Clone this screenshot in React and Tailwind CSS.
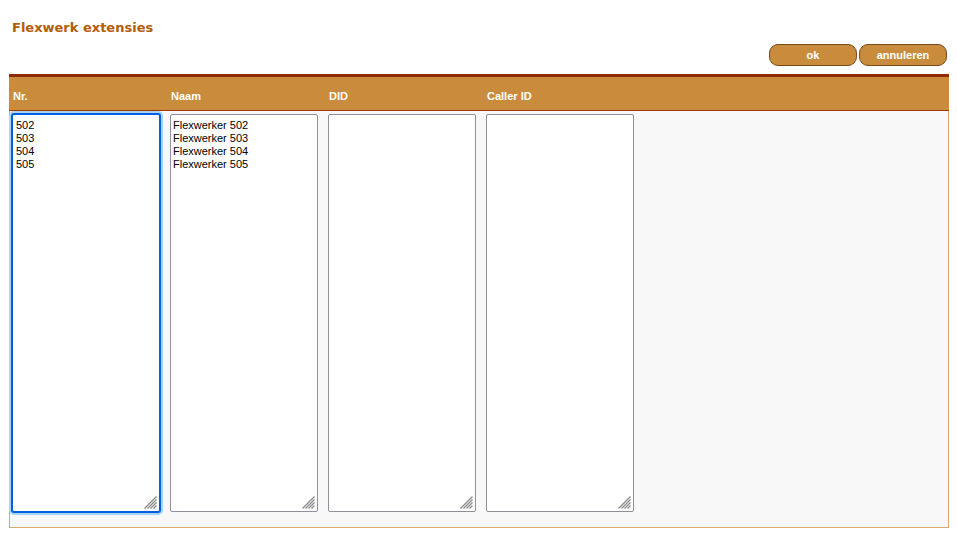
import React, { useEffect, useRef } from "react";

const columns = [
    { label: "Nr.", value: "502\n503\n504\n505", focused: true },
    { label: "Naam", value: "Flexwerker 502\nFlexwerker 503\nFlexwerker 504\nFlexwerker 505" },
    { label: "DID", value: "" },
    { label: "Caller ID", value: "" },
];

function Grip() {
    return (
        <svg width="13" height="13" viewBox="0 0 13 13" className="absolute right-[3px] bottom-[3px] pointer-events-none">
            <g stroke="#8a8a8a" strokeWidth="1.2">
                <line x1="12.5" y1="0.5" x2="0.5" y2="12.5" />
                <line x1="12.5" y1="3.5" x2="3.5" y2="12.5" />
                <line x1="12.5" y1="6.5" x2="6.5" y2="12.5" />
                <line x1="12.5" y1="9.5" x2="9.5" y2="12.5" />
            </g>
        </svg>
    );
}

function Field({ col }) {
    const ref = useRef(null);

    useEffect(() => {
        if (col.focused && ref.current) {
            const el = ref.current;
            el.focus();
            el.setSelectionRange(el.value.length, el.value.length);
        }
    }, [col.focused]);

    return (
        <div className="relative w-[148px] h-[398px]">
            <textarea
                ref={ref}
                defaultValue={col.value}
                className={
                    col.focused
                        ? "block w-full h-full resize-none bg-white border border-[#0060df] rounded-[2px] pl-[3px] pt-[4px] text-[11px] leading-[13px] text-black outline-none shadow-[0_0_0_1px_#0060df,0_0_0_3px_#aad4f5]"
                        : "block w-full h-full resize-none bg-white border border-[#8f8f9d] rounded-[2px] pl-[2px] pt-[4px] text-[11px] leading-[13px] text-black outline-none"
                }
                style={{ fontFamily: '"Liberation Sans", Arial, sans-serif' }}
            />
            <Grip />
        </div>
    );
}

export default function App() {
    return (
        <div className="w-full min-h-screen bg-white" style={{ fontFamily: '"Liberation Sans", Arial, sans-serif' }}>
            <h1
                className="pt-[20px] pl-3 text-[13px] leading-[16px] font-bold text-[#b45c06]"
                style={{ fontFamily: '"DejaVu Sans", Verdana, sans-serif' }}
            >
                Flexwerk extensies
            </h1>

            <div className="flex justify-end gap-[2px] pr-[10px] mt-[8px]">
                <button className="w-[88px] h-[22px] rounded-[9px] border border-[#7e4a1c] bg-[#c98c3c] text-white text-[11px] font-bold">
                    ok
                </button>
                <button className="w-[88px] h-[22px] rounded-[9px] border border-[#7e4a1c] bg-[#c98c3c] text-white text-[11px] font-bold">
                    annuleren
                </button>
            </div>

            <div className="ml-[9px] mr-[8px] mt-[8px]">
                <div className="border-t-[3px] border-[#8c2c00] bg-[#c98c3c] h-[37px] border-b border-b-[#9c3a00] flex pl-[4px] pt-[13px]">
                    {columns.map((c) => (
                        <div key={c.label} className="w-[158px] text-[11px] leading-[13px] font-bold text-white">
                            {c.label}
                        </div>
                    ))}
                </div>
                <div className="bg-[#f8f8f8] border-x border-b border-[#d9a772] flex gap-[10px] pl-[2px] pt-[3px] pb-[15px]">
                    {columns.map((c) => (
                        <Field key={c.label} col={c} />
                    ))}
                </div>
            </div>
        </div>
    );
}
